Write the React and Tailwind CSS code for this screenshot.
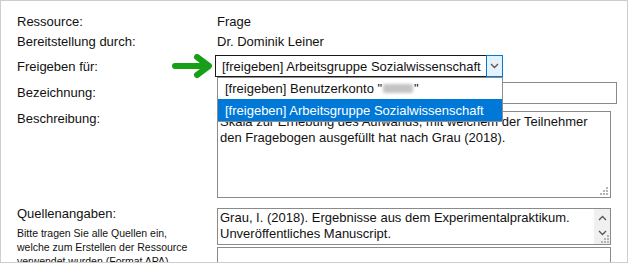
import React from "react";

function Grip({ className = "" }) {
  const dots = [
    [6, 0],
    [3, 3],
    [6, 3],
    [0, 6],
    [3, 6],
    [6, 6],
  ];
  return (
    <svg width="8" height="8" viewBox="0 0 8 8" className={className}>
      {dots.map(([x, y], i) => (
        <rect key={i} x={x} y={y} width="2" height="2" fill="#b4b4b4" />
      ))}
    </svg>
  );
}

function Chevron({ up = false, className = "" }) {
  return (
    <svg width="9" height="6" viewBox="0 0 9 6" className={className}>
      <polyline
        points={up ? "1,5 4.5,1.5 8,5" : "1,1 4.5,4.5 8,1"}
        fill="none"
        stroke="#555"
        strokeWidth="1.3"
      />
    </svg>
  );
}

export default function App() {
  return (
    <div className="w-[630px] h-[263px] bg-white font-['Liberation_Sans',Arial,sans-serif] text-[13px] leading-[15px] text-[#111]">
      <div className="relative w-[628px] h-[263px] border border-[#cdcdcd] overflow-hidden pl-[16px] pt-[13px]">
        {/* Row 1 */}
        <div className="flex">
          <div className="w-[200px]">Ressource:</div>
          <div>Frage</div>
        </div>
        {/* Row 2 */}
        <div className="flex mt-[5px]">
          <div className="w-[200px]">Bereitstellung durch:</div>
          <div>Dr. Dominik Leiner</div>
        </div>
        {/* Row 3 */}
        <div className="flex items-start mt-[6px]">
          <div className="w-[200px] mt-[4px] relative">
            Freigeben für:
            <svg
              className="absolute left-[155px] top-[-5px]"
              width="44"
              height="26"
              viewBox="0 0 44 26"
            >
              <line
                x1="3"
                y1="12"
                x2="36"
                y2="12"
                stroke="#17a017"
                strokeWidth="6"
                strokeLinecap="round"
              />
              <polyline
                points="25,3 37,12 25,21"
                fill="none"
                stroke="#17a017"
                strokeWidth="6"
                strokeLinecap="round"
                strokeLinejoin="round"
              />
            </svg>
          </div>
          <div className="relative -ml-[2px]">
            <div className="flex w-[288px] h-[22px] border border-[#1a1a1a] bg-white">
              <div className="flex-1 pl-[6px] pt-[3px] whitespace-nowrap">
                [freigeben] Arbeitsgruppe Sozialwissenschaft
              </div>
              <div className="w-[17px] -my-[1px] -mr-[1px] border border-[#0078d7] bg-[#e5f1fb] flex items-center justify-center">
                <Chevron />
              </div>
            </div>
            {/* Dropdown list */}
            <div className="absolute left-[2px] top-[22px] w-[286px] border border-[#8c8c8c] bg-white z-10">
              <div className="h-[21px] flex items-center pl-[7px] whitespace-nowrap">
                [freigeben] Benutzerkonto "
                <span className="inline-block w-[30px] h-[9px] mx-[1px] bg-[#c4c4c4] blur-[1.5px] rounded-[2px]"></span>
                "
              </div>
              <div className="h-[22px] flex items-center pl-[7px] bg-[#0078d7] text-white whitespace-nowrap">
                [freigeben] Arbeitsgruppe Sozialwissenschaft
              </div>
            </div>
          </div>
        </div>
        {/* Row 4 */}
        <div className="flex items-start mt-[5px]">
          <div className="w-[200px] mt-[3px]">Bezeichnung:</div>
          <div className="w-[400px] h-[22px] border border-[#8a8a8a] bg-white"></div>
        </div>
        {/* Row 5 */}
        <div className="flex items-start mt-[7px]">
          <div className="w-[200px]">Beschreibung:</div>
          <div className="relative w-[394px] h-[87px] border border-[#8a8a8a] bg-white pl-[2px] pt-[2px] leading-[16px]">
            Skala zur Erhebung des Aufwands, mit welchem der Teilnehmer
            <br />
            den Fragebogen ausgefüllt hat nach Grau (2018).
            <Grip className="absolute right-[2px] bottom-[2px]" />
          </div>
        </div>
        {/* Row 6 */}
        <div className="flex items-start mt-[10px]">
          <div className="w-[200px] -mt-[2px]">
            <div>Quellenangaben:</div>
            <div className="mt-[5px] text-[10.5px] leading-[14px]">
              Bitte tragen Sie alle Quellen ein,
              <br />
              welche zum Erstellen der Ressource
              <br />
              verwendet wurden (Format APA).
            </div>
          </div>
          <div className="flex flex-col">
            <div className="relative flex w-[394px] h-[37px] border border-[#8a8a8a] bg-white leading-[16px]">
              <div className="flex-1 pl-[2px] pt-[1px] whitespace-nowrap overflow-hidden">
                Grau, I. (2018). Ergebnisse aus dem Experimentalpraktikum.
                <br />
                Unveröffentliches Manuscript.
              </div>
              <div className="w-[16px] bg-[#f0f0f0] flex flex-col items-center pt-[6px]">
                <Chevron up />
                <Chevron className="mt-[9px]" />
              </div>
              <Grip className="absolute right-[1px] bottom-[1px]" />
            </div>
            <div className="w-[394px] h-[40px] mt-[2px] border border-[#8a8a8a] bg-white"></div>
          </div>
        </div>
      </div>
    </div>
  );
}
